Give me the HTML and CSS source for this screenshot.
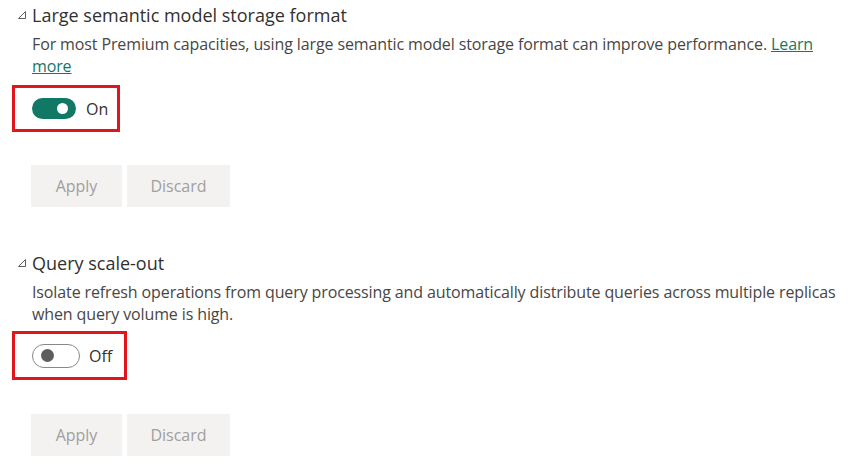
FILE: index.html
```html
<!DOCTYPE html>
<html>
<head>
<meta charset="utf-8">
<link rel="stylesheet" href="styles.css">
</head>
<body>
<div class="page">
  <section class="section first">
    <div class="head">
      <svg class="tri" width="10" height="10" viewBox="0 0 10 10"><path d="M8.5 1.5 V8.5 H1.5 Z" fill="none" stroke="#605e5c" stroke-width="1" stroke-linejoin="round"/></svg>
      <h2 class="title">Large semantic model storage format</h2>
    </div>
    <p class="desc">For most Premium capacities, using large semantic model storage format can improve performance. <a class="link" href="#">Learn more</a></p>
    <div class="toggle-box on-box">
      <span class="switch on"><span class="knob"></span></span>
      <span class="state">On</span>
    </div>
    <div class="buttons">
      <button class="btn apply">Apply</button>
      <button class="btn discard">Discard</button>
    </div>
  </section>
  <section class="section second">
    <div class="head">
      <svg class="tri" width="10" height="10" viewBox="0 0 10 10"><path d="M8.5 1.5 V8.5 H1.5 Z" fill="none" stroke="#605e5c" stroke-width="1" stroke-linejoin="round"/></svg>
      <h2 class="title">Query scale-out</h2>
    </div>
    <p class="desc">Isolate refresh operations from query processing and automatically distribute queries across multiple replicas when query volume is high.</p>
    <div class="toggle-box off-box">
      <span class="switch off"><span class="knob"></span></span>
      <span class="state">Off</span>
    </div>
    <div class="buttons">
      <button class="btn apply">Apply</button>
      <button class="btn discard">Discard</button>
    </div>
  </section>
</div>
</body>
</html>
```
FILE: styles.css
```css
* { box-sizing: border-box; }
body {
  margin: 0;
  background: #ffffff;
  font-family: "Open Sans", "Noto Sans", sans-serif;
  color: #323130;
}
.page {
  width: 852px;
  height: 471px;
  overflow: hidden;
}
.section.first { padding-top: 2px; }
.section.second { padding-top: 43px; }
.head {
  display: flex;
  align-items: center;
  padding-left: 17px;
  height: 26px;
}
.tri { margin-right: 5px; flex: none; }
.title {
  margin: 0;
  font-size: 18px;
  font-weight: 400;
  color: #323130;
}
.desc {
  margin: 5px 0 0 32px;
  width: 810px;
  font-size: 16px;
  line-height: 22px;
  color: #484644;
  letter-spacing: -0.12px;
}
.link {
  color: #117865;
  text-decoration: underline;
}
.toggle-box {
  display: inline-flex;
  align-items: center;
  margin-left: 12px;
  border: 3px solid #e3151a;
  padding-left: 17px;
}
.on-box {
  margin-top: 8px;
  width: 108px;
  height: 47px;
}
.off-box {
  margin-top: 6px;
  width: 115px;
  height: 49px;
}
.switch {
  position: relative;
  display: inline-block;
  border-radius: 12px;
  flex: none;
}
.switch.on {
  width: 44px;
  height: 21px;
  background: #117865;
}
.switch.on .knob {
  position: absolute;
  width: 11px;
  height: 11px;
  border-radius: 50%;
  background: #ffffff;
  top: 5px;
  left: 25px;
}
.switch.off {
  width: 48px;
  height: 24px;
  border: 1px solid #8a8886;
  background: #ffffff;
}
.switch.off .knob {
  position: absolute;
  width: 13px;
  height: 13px;
  border-radius: 50%;
  background: #605e5c;
  top: 4.5px;
  left: 8px;
}
.state {
  margin-left: 10px;
  font-size: 16px;
  color: #323130;
}
.off-box .state { margin-left: 9px; }
.buttons {
  display: flex;
  gap: 5px;
  margin-left: 31px;
}
.first .buttons { margin-top: 33px; }
.second .buttons { margin-top: 34px; }
.btn {
  border: none;
  background: #f3f2f1;
  color: #a19f9d;
  font-family: "Open Sans", "Noto Sans", sans-serif;
  font-size: 16px;
  height: 42px;
  padding: 0;
}
.btn.apply { width: 91px; }
.btn.discard { width: 103px; }
```
